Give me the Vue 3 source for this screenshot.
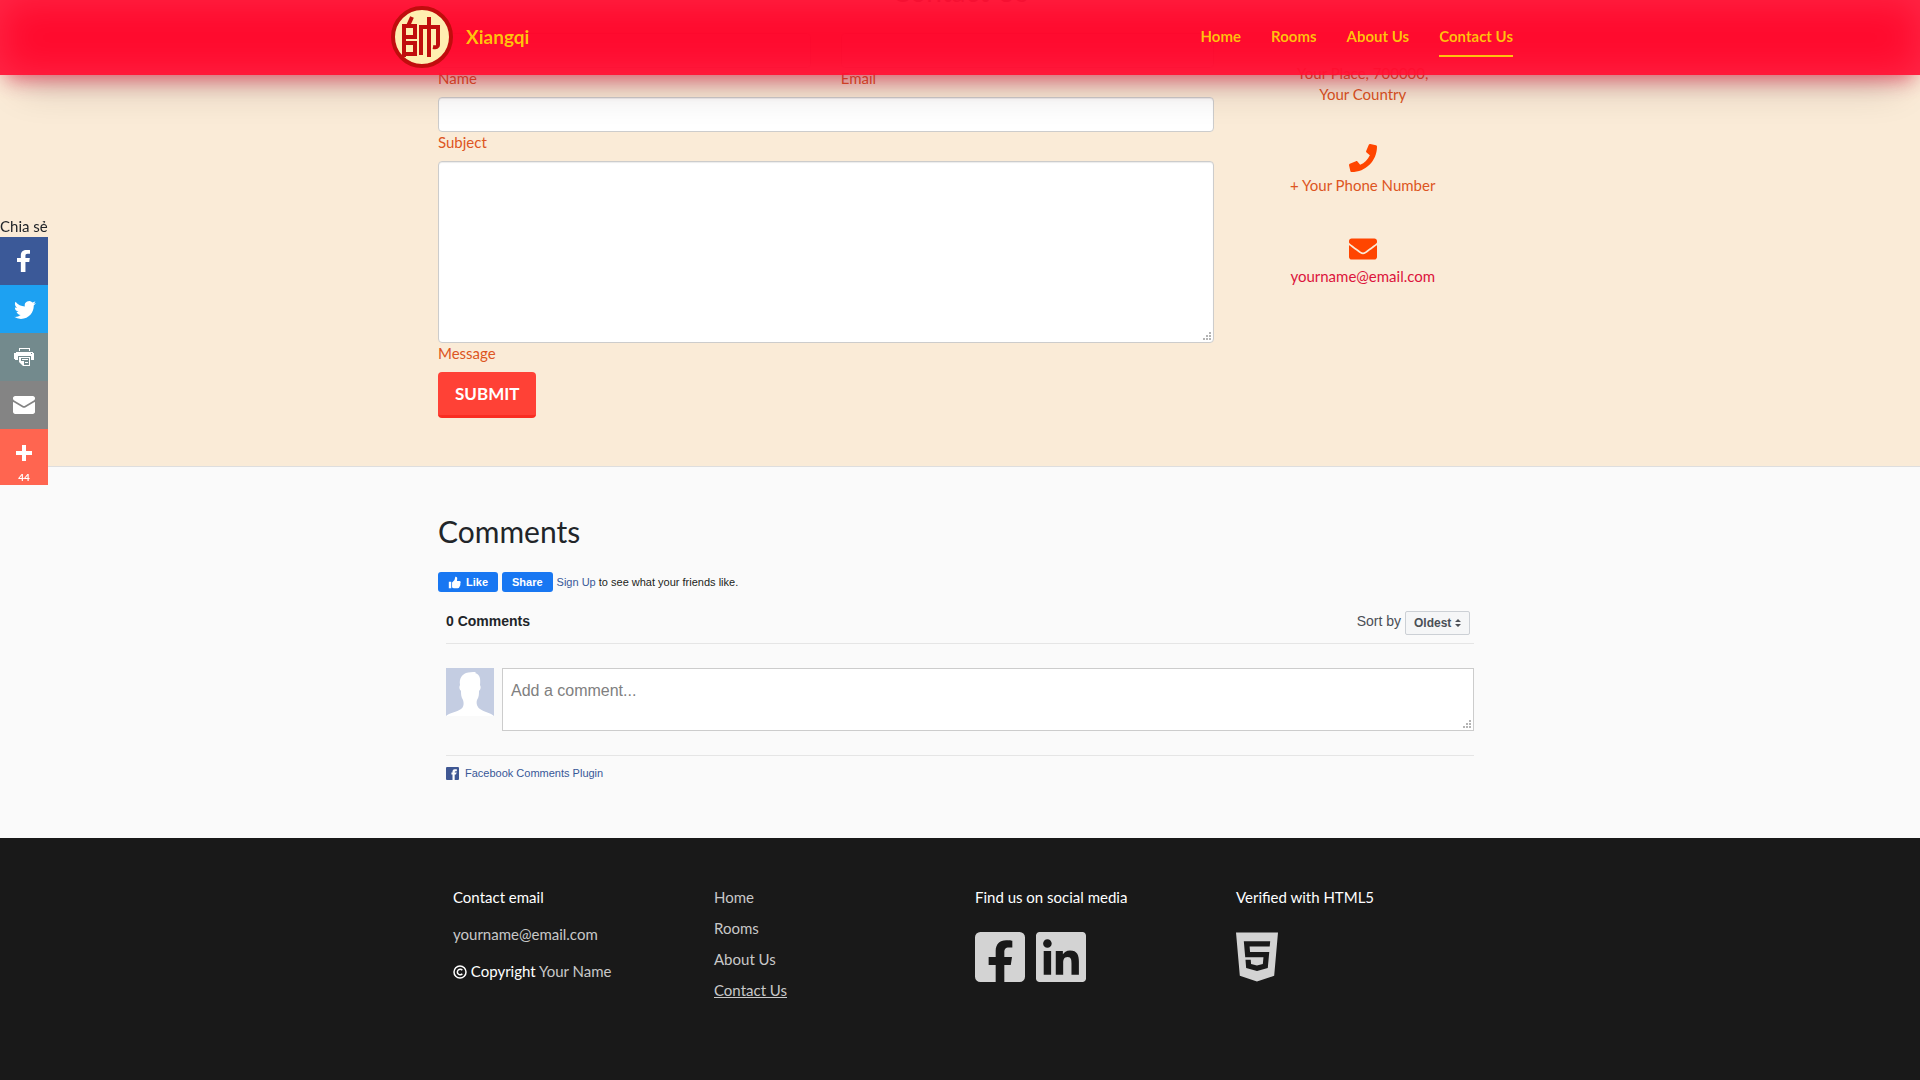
<!--
	Contact page: form, comments, footer
-->
<template>
	<div class="page">
		<header class="navbar">
			<div class="navbar-inner">
				<a href="#" class="brand">
					<svg class="logo" viewBox="0 0 64 64" aria-hidden="true">
						<circle cx="32" cy="32" r="29" fill="#ffeeb0" stroke="#c00d0d" stroke-width="4" />
						<g fill="none" stroke="#c00d0d" stroke-width="4">
							<path d="M22 12l-4 9M14 52V21h11v11H14M14 38h11v11H14" />
							<path d="M31 50V22h17v18q0 3-5 2M39 12v40" />
						</g>
					</svg>
					<span>Xiangqi</span>
				</a>
				<nav class="nav-links">
					<a v-for="link in links" :key="link" href="#" :class="{ active: link === 'Contact Us' }">{{ link }}</a>
				</nav>
			</div>
		</header>

		<section class="contact">
			<h2>Contact Us</h2>
			<div class="contact-row">
				<form class="contact-form" @submit.prevent>
					<div class="form-row">
						<div class="field">
							<input id="name" type="text" />
							<label for="name">Name</label>
						</div>
						<div class="field">
							<input id="email" type="email" />
							<label for="email">Email</label>
						</div>
					</div>
					<div class="field">
						<input id="subject" type="text" />
						<label for="subject">Subject</label>
					</div>
					<div class="field">
						<textarea id="message"></textarea>
						<label for="message">Message</label>
					</div>
					<button type="submit" class="btn-submit">SUBMIT</button>
				</form>
				<ul class="contact-info">
					<li class="address">Your Place, 700000,<br />Your Country</li>
					<li>
						<svg viewBox="0 0 512 512"><path :d="icons.phone" /></svg>
						<span>+ Your Phone Number</span>
					</li>
					<li>
						<svg viewBox="0 0 512 512"><path :d="icons.envelope" /></svg>
						<a href="#">yourname@email.com</a>
					</li>
				</ul>
			</div>
		</section>

		<section class="comments">
			<h2>Comments</h2>
			<div class="fb-like">
				<button type="button">
					<svg viewBox="0 0 16 16"><path d="M1 7h3v8H1zM5 14V8l3-3 1-4c2 0 3 1 2 5h3c2 0 2 2 1 3 1 1 0 2 0 2 0 1 0 2-1 2 0 1 0 2-2 2H7z" /></svg>
					Like
				</button>
				<button type="button">Share</button>
				<span><a href="#">Sign Up</a> to see what your friends like.</span>
			</div>
			<div class="fb-comments">
				<div class="fb-head">
					<strong>0 Comments</strong>
					<div class="sort">
						<label for="sort">Sort by</label>
						<select id="sort">
							<option>Oldest</option>
						</select>
					</div>
				</div>
				<div class="composer">
					<svg class="avatar" viewBox="0 0 48 48" aria-hidden="true">
						<path fill="#c4cde2" d="M0 0h48v48H0z" />
						<path
							fill="#fff"
							d="M0 48c3-3 11-4 15-7 3-2 3-6 2-9-2-3-2-6-2-9-2-2-2-4-1-6-1-7 2-10 6-12 3-1 6-1 10-1l-1 1c4 1 6 4 5 12 1 2 1 4-1 6 0 3 0 6-2 9-1 3 0 7 3 9 4 3 11 4 14 7z"
						/>
					</svg>
					<textarea placeholder="Add a comment..." aria-label="Add a comment"></textarea>
				</div>
				<a href="#" class="plugin">
					<svg viewBox="0 0 12 12">
						<rect width="12" height="12" rx="1" fill="#3f5793" />
						<path fill="#fff" d="M6 12V7H5V5h1V4q0-2 2-2h2v2H9q-1 0-1 1h2L9 7H8v5z" />
					</svg>
					Facebook Comments Plugin
				</a>
			</div>
		</section>

		<footer class="footer">
			<div class="footer-inner">
				<div class="footer-col">
					<p>Contact email</p>
					<p><a href="#">yourname@email.com</a></p>
					<p class="copyright">
						<svg viewBox="0 0 14 14" fill="none" stroke="#fff" stroke-width="1.5">
							<circle cx="7" cy="7" r="6" />
							<path d="M9.3 5.2a2.800 2.800 0 1 0 0 3.600" />
						</svg>
						Copyright <a href="#">Your Name</a>
					</p>
				</div>
				<nav class="footer-col footer-nav">
					<a v-for="link in links" :key="link" href="#" :class="{ active: link === 'Contact Us' }">{{ link }}</a>
				</nav>
				<div class="footer-col">
					<p>Find us on social media</p>
					<div class="social">
						<a href="#" aria-label="Facebook"><svg viewBox="0 32 448 448"><path :d="icons.facebook" /></svg></a>
						<a href="#" aria-label="LinkedIn"><svg viewBox="0 32 448 448"><path :d="icons.linkedin" /></svg></a>
					</div>
				</div>
				<div class="footer-col">
					<p>Verified with HTML5</p>
					<div class="social">
						<a href="#" aria-label="HTML5"><svg class="html5" viewBox="0 32 384 448"><path :d="icons.html5" /></svg></a>
					</div>
				</div>
			</div>
		</footer>

		<aside class="share-bar">
			<span class="share-title">Chia sẻ</span>
			<button v-for="item in shares" :key="item.name" type="button" :class="item.name" :aria-label="item.name">
				<svg viewBox="0 0 32 32"><path fill-rule="evenodd" :d="item.path" /></svg>
				<small v-if="item.count">{{ item.count }}</small>
			</button>
		</aside>
	</div>
</template>

<script setup>
const links = ['Home', 'Rooms', 'About Us', 'Contact Us'];

const icons = {
	phone: 'M493.4 24.6l-104-24c-11.3-2.6-22.9 3.3-27.5 13.9l-48 112c-4.2 9.8-1.4 21.3 6.9 28l60.6 49.6c-36 76.7-98.9 140.5-177.2 177.2l-49.6-60.6c-6.8-8.3-18.2-11.1-28-6.9l-112 48C3.9 366.5-2 378.1.6 389.4l24 104C27.1 504.2 36.7 512 48 512c256.1 0 464-207.5 464-464 0-11.2-7.7-20.9-18.6-23.4z',
	envelope:
		'M502.3 190.8c3.9-3.1 9.7-.2 9.7 4.7V400c0 26.5-21.5 48-48 48H48c-26.5 0-48-21.5-48-48V195.6c0-5 5.7-7.8 9.7-4.7 22.4 17.4 52.1 39.5 154.1 113.6 21.1 15.4 56.7 47.8 92.2 47.6 35.7.3 72-32.8 92.3-47.6 102-74.1 131.6-96.3 154-113.7zM256 320c23.2.4 56.6-29.2 73.4-41.4 132.7-96.3 142.8-104.7 173.4-128.7 5.8-4.5 9.2-11.5 9.2-18.9v-19c0-26.5-21.5-48-48-48H48c-26.5 0-48 21.5-48 48v19c0 7.4 3.4 14.3 9.2 18.9 30.6 23.9 40.7 32.4 173.4 128.7 16.8 12.2 50.2 41.8 73.4 41.4z',
	facebook:
		'M400 32H48A48 48 0 0 0 0 80v352a48 48 0 0 0 48 48h137.25V327.69h-63V256h63v-54.64c0-62.15 37-96.48 93.67-96.48 27.14 0 55.52 4.84 55.52 4.84v61h-31.27c-30.81 0-40.42 19.12-40.42 38.73V256h68.78l-11 71.69h-57.78V480H400a48 48 0 0 0 48-48V80a48 48 0 0 0-48-48z',
	linkedin:
		'M416 32H31.9C14.3 32 0 46.5 0 64.3v383.4C0 465.5 14.3 480 31.9 480H416c17.6 0 32-14.5 32-32.3V64.3c0-17.8-14.4-32.3-32-32.3zM135.4 416H69V202.2h66.5V416zm-33.2-243c-21.3 0-38.5-17.3-38.5-38.5S80.9 96 102.2 96c21.2 0 38.5 17.3 38.5 38.5 0 21.3-17.2 38.5-38.5 38.5zm282.1 243h-66.4V312c0-24.8-.5-56.7-34.5-56.7-34.6 0-39.9 27-39.9 54.9V416h-66.4V202.2h63.7v29.2h.9c8.9-16.8 30.6-34.5 62.9-34.5 67.2 0 79.7 44.3 79.7 101.9V416z',
	html5: 'M0 32l34.9 395.8L191.5 480l157.6-52.2L384 32H0zm308.2 127.9H124.4l4.1 49.4h175.6l-13.6 148.4-97.9 27v.3h-1.1l-98.7-27.3-6-75.8h47.7L138 320l53.5 14.5 53.7-14.5 6-62.2H84.3L71.5 112.2h241.1l-4.4 47.7z',
};

const shares = [
	{
		name: 'facebook',
		path: 'M22 5.16c-.406-.054-1.806-.16-3.43-.16-3.4 0-5.733 1.825-5.733 5.17v2.882H9v3.913h3.837V27h4.604V16.965h3.823l.587-3.913h-4.41v-2.5c0-1.123.347-1.903 2.198-1.903H22V5.16z',
	},
	{
		name: 'twitter',
		path: 'M27.996 10.116c-.81.36-1.68.602-2.592.71a4.526 4.526 0 0 0 1.984-2.496 9.037 9.037 0 0 1-2.866 1.095 4.513 4.513 0 0 0-7.69 4.116 12.81 12.81 0 0 1-9.3-4.715 4.49 4.49 0 0 0-.612 2.27 4.51 4.51 0 0 0 2.008 3.755 4.495 4.495 0 0 1-2.044-.564v.057a4.515 4.515 0 0 0 3.62 4.425 4.52 4.52 0 0 1-2.04.077 4.517 4.517 0 0 0 4.217 3.134 9.055 9.055 0 0 1-5.604 1.93A9.18 9.18 0 0 1 6 23.85a12.773 12.773 0 0 0 6.918 2.027c8.3 0 12.84-6.876 12.84-12.84 0-.195-.005-.39-.014-.583a9.172 9.172 0 0 0 2.252-2.336',
	},
	{
		name: 'print',
		path: 'M11 7h11v3h-1V8h-9v2h-1zM8 11h17v1h1v7h-3v-4H10v4H7v-1H6v-6h2zM23 12v1h1v-1zM11 16h11v9h-7l-4-4zM13 17v3h3v4h5v-7zM14 18h6v1h-6zM17 21h3v1h-3z',
	},
	{
		name: 'email',
		path: 'M27 22.757c0 1.24-.988 2.243-2.19 2.243H7.19C5.98 25 5 23.994 5 22.757V13.67c0-.556.39-.773.855-.496l8.78 5.238c.782.467 1.95.467 2.73 0l8.78-5.238c.472-.28.855-.063.855.495v9.087zM27 9.243C27 8.006 26.02 7 24.81 7H7.19C5.988 7 5 8.004 5 9.243v.465c0 .554.385 1.232.857 1.514l9.61 5.733c.267.16.8.16 1.067 0l9.61-5.733c.473-.283.856-.96.856-1.514v-.465z',
	},
	{ name: 'more', path: 'M18 14V8h-4v6H8v4h6v6h4v-6h6v-4h-6z', count: 44 },
];
</script>

<style>
body {
	margin: 0;
	background: #fafafa;
}
</style>

<style scoped>
* {
	box-sizing: border-box;
}

.page {
	display: flex;
	flex-direction: column;
	min-height: 100vh;
	font: 15px/21px Lato, 'Noto Sans', sans-serif;
	color: #212529;
}

a {
	text-decoration: none;
}

h2 {
	margin: 0;
	font-size: 30px;
	line-height: 36px;
	font-weight: 400;
}

.navbar {
	position: fixed;
	top: 0;
	left: 0;
	right: 0;
	z-index: 10;
	height: 75px;
	background: rgba(255, 0, 38, 0.96);
	box-shadow:
		inset 0 0 40px rgba(255, 255, 255, 0.13),
		0 10px 20px -6px rgba(220, 20, 60, 0.65),
		0 30px 40px -20px rgba(0, 0, 0, 0.2);
}

.navbar-inner {
	display: flex;
	align-items: center;
	justify-content: space-between;
	max-width: 1140px;
	height: 100%;
	margin: 0 auto;
	padding: 0 17px 2px 0;
}

.brand {
	display: flex;
	align-items: center;
	gap: 12px;
	color: #ffc20e;
	font-size: 19px;
	font-weight: 700;
}

.logo {
	width: 64px;
	height: 64px;
}

.nav-links {
	display: flex;
	gap: 30px;
}

.nav-links a {
	padding: 10px 0 8px;
	border-bottom: 2px solid transparent;
	color: #ffc20e;
	font-weight: 700;
}

.nav-links .active {
	border-color: #ffc20e;
}

/* scrolled part of the page, the heading sits behind the navbar */
.contact {
	margin-top: -67px;
	padding: 40px 24px 48px;
	background: #faebd7;
	border-bottom: 1px solid #dedede;
}

.contact h2 {
	margin-bottom: 24px;
	font-size: 28px;
	text-align: center;
}

.contact-row {
	display: flex;
	max-width: 1074px;
	margin: 0 auto;
}

.contact-form {
	width: 75%;
	padding: 0 15px;
}

.form-row {
	display: grid;
	grid-template-columns: 1fr 1fr;
	gap: 30px;
}

.field {
	display: flex;
	flex-direction: column;
	margin-bottom: 8px;
	color: #dd5522;
}

.field input,
.field textarea {
	width: 100%;
	height: 35px;
	padding: 6px 12px;
	border: 1px solid #ccc;
	border-radius: 4px;
	background: #fff;
	box-shadow: inset 0 1px 1px rgba(0, 0, 0, 0.08);
	font: inherit;
}

.field textarea {
	height: 182px;
	resize: vertical;
}

textarea::-webkit-resizer {
	background: url("data:image/svg+xml,%3Csvg xmlns='http://www.w3.org/2000/svg' width='12' height='12'%3E%3Cpath fill='%23b4b4b4' d='M8 2h2v2H8zM8 5h2v2H8zM5 5h2v2H5zM8 8h2v2H8zM5 8h2v2H5zM2 8h2v2H2z'/%3E%3C/svg%3E") no-repeat right bottom;
}

.btn-submit {
	height: 46px;
	padding: 0 17px;
	border: 0;
	border-bottom: 3px solid #f92d22;
	border-radius: 4px;
	background: #ff4136;
	color: #fff;
	font: 700 17px/24px Lato, sans-serif;
}

.contact-info {
	width: 25%;
	margin: 0;
	padding: 30px 0 0;
	list-style: none;
	text-align: center;
	color: #dd5522;
}

.contact-info li {
	display: flex;
	flex-direction: column;
	align-items: center;
	gap: 3px;
	margin-bottom: 39px;
}

.contact-info .address {
	display: block;
}

.contact-info svg {
	width: 28px;
	height: 28px;
	fill: #ff4500;
}

.contact-info a {
	color: #dc143c;
}

.comments {
	width: 100%;
	max-width: 1092px;
	margin: 0 auto;
	padding: 46px 24px 54px;
	font-family: 'Liberation Sans', Arial, sans-serif;
}

.comments h2 {
	margin-bottom: 23px;
	font-family: Lato, sans-serif;
}

.fb-like {
	display: flex;
	align-items: center;
	gap: 4px;
	font-size: 11px;
	line-height: 20px;
	color: #1c1e21;
}

.fb-like button {
	display: flex;
	align-items: center;
	gap: 5px;
	height: 20px;
	padding: 0 10px;
	border: 0;
	border-radius: 3px;
	background: #1877f2;
	color: #fff;
	font: 700 11px/20px 'Liberation Sans', Arial, sans-serif;
}

.fb-like svg {
	width: 13px;
	height: 13px;
	fill: #fff;
}

.fb-like a,
.plugin {
	color: #385898;
}

.fb-comments {
	padding: 19px 8px 0;
}

.fb-head {
	display: flex;
	align-items: flex-start;
	justify-content: space-between;
	padding: 0 4px 8px 0;
	border-bottom: 1px solid #e5e5e5;
	font-size: 14px;
}

.sort {
	display: flex;
	gap: 4px;
	color: #4b4f56;
}

.sort select {
	appearance: none;
	width: 65px;
	height: 24px;
	padding: 0 8px;
	border: 1px solid #ccd0d5;
	border-radius: 2px;
	background: #f5f6f7
		url("data:image/svg+xml,%3Csvg xmlns='http://www.w3.org/2000/svg' width='6' height='8'%3E%3Cpath fill='%234b4f56' d='M0 3l3-3 3 3zM0 5l3 3 3-3z'/%3E%3C/svg%3E")
		no-repeat right 8px center;
	color: #4b4f56;
	font: 700 12px/22px 'Liberation Sans', Arial, sans-serif;
}

.composer {
	display: flex;
	gap: 8px;
	padding: 24px 0;
	border-bottom: 1px solid #e5e5e5;
}

.avatar {
	flex: none;
	width: 48px;
	height: 48px;
}

.composer textarea {
	flex: 1;
	height: 63px;
	padding: 12px 8px;
	border: 1px solid #ccc;
	background: #fff;
	font: 16px/20px 'Liberation Sans', Arial, sans-serif;
}

.composer textarea::placeholder {
	color: #808080;
}

.plugin {
	display: flex;
	align-items: center;
	gap: 6px;
	padding-top: 7px;
	font-size: 11px;
}

.plugin svg {
	width: 13px;
	height: 13px;
}

.footer {
	flex: 1;
	padding: 49px 24px;
	background: #191919;
	color: #fff;
}

.footer-inner {
	display: grid;
	grid-template-columns: repeat(4, 1fr);
	max-width: 1044px;
	margin: 0 auto;
}

.footer-col {
	padding: 0 15px;
}

.footer p {
	margin: 0 0 16px;
}

.footer a {
	color: #c8c8c8;
}

.copyright svg {
	width: 14px;
	height: 14px;
	vertical-align: -2px;
}

.footer-nav {
	display: flex;
	flex-direction: column;
	align-items: flex-start;
	gap: 10px;
}

.footer-nav .active {
	text-decoration: underline;
}

.social {
	display: flex;
	gap: 11px;
	padding-top: 8px;
}

.social svg {
	display: block;
	width: 50px;
	height: 50px;
	fill: #d3d3d3;
}

.social .html5 {
	width: 42px;
}

.share-bar {
	position: fixed;
	top: 216px;
	left: 0;
	z-index: 5;
	display: flex;
	flex-direction: column;
	width: 48px;
}

.share-title {
	white-space: nowrap;
}

.share-bar button {
	display: flex;
	flex-direction: column;
	align-items: center;
	height: 48px;
	padding: 8px 0 0;
	border: 0;
	color: #fff;
}

.share-bar svg {
	width: 32px;
	height: 32px;
	fill: #fff;
}

.share-bar small {
	font: 700 10px/16px Lato, sans-serif;
}

.share-bar .facebook {
	background: #3b5998;
}

.share-bar .twitter {
	background: #1da1f2;
}

.share-bar .print {
	background: #738a8d;
}

.share-bar .email {
	background: #848484;
}

.share-bar .more {
	height: 56px;
	background: #ff6550;
}
</style>
